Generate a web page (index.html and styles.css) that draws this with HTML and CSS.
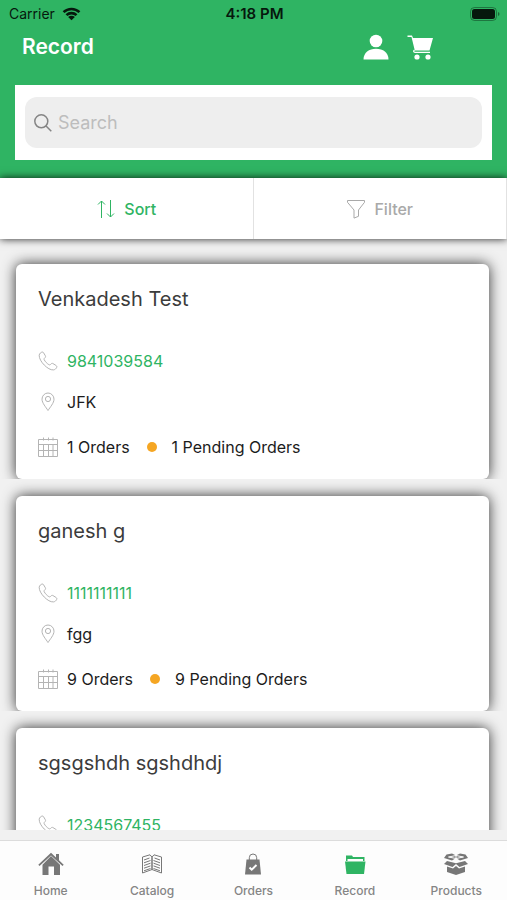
FILE: index.html
```html
<!DOCTYPE html>
<html lang="en">
<head>
<meta charset="utf-8">
<meta name="viewport" content="width=device-width, initial-scale=1">
<title>Record</title>
<link rel="stylesheet" href="styles.css">
</head>
<body>
<svg class="sprite" aria-hidden="true">
  <symbol id="phone" viewBox="0 0 20 20"><path d="M1.200 4.200C1.400 2.600 3 1.200 4.300 1c.7 0 1 .4 1.400 1l1.600 2.700c.5.9.2 1.500-.3 2-.9.8-1.200 1.300-.7 2.200.9 1.700 2.700 3.600 4.500 4.700.9.500 1.400.3 2.200-.6.600-.7 1.200-.9 2-.4l2.900 1.800c.9.600 1.100 1.200.8 2-.6 1.300-1.800 2.300-3.200 2.500-2.900.3-6.300-1.900-9.200-4.800C3.400 11.200 1 7.300 1.200 4.200z"/></symbol>
  <symbol id="pin" viewBox="0 0 20 20"><path d="M10 18.500C8 15.300 4 11 4 7.200a6 6.200 0 0 1 12 0c0 3.800-4 8.100-6 11.300z"/><circle cx="10" cy="7" r="2.600"/></symbol>
  <symbol id="calendar" viewBox="0 0 20 20"><path d="M.5 2.500h19v17H.5zM.5 7.500h19M.5 13.500h19M5.500 7.500v12M10.500 7.500v12M15 7.500v12M5.500.5v3M10.500.5v3M15 .5v3"/></symbol>
</svg>
<div class="app">
  <header class="header">
    <div class="status">
      <span class="carrier">Carrier
        <svg class="wifi" viewBox="0 0 20 15"><path d="M1.500 5.500a12.300 12.300 0 0 1 17 0M4.600 8.700a7.800 7.800 0 0 1 10.800 0" fill="none" stroke="currentColor" stroke-width="2.800"/><path d="M6.400 10.700a5.200 5.200 0 0 1 7.200 0L10 14.300z"/></svg>
      </span>
      <span class="time">4:18 PM</span>
      <span class="power"><svg class="battery" viewBox="0 0 30 14"><rect x=".5" y=".5" width="26" height="13" rx="4" fill="none" stroke="currentColor" opacity=".4"/><rect x="2" y="2" width="23" height="10" rx="2.500"/><path d="M28 5v4q1.500-.6 1.500-2T28 5z" opacity=".5"/></svg></span>
    </div>
    <div class="titlebar">
      <h1>Record</h1>
      <button class="action" type="button" aria-label="Profile"><svg viewBox="0 0 26 26"><circle cx="13" cy="7" r="6.300"/><path d="M.5 25.500C.5 18.500 6 14.700 13 14.700s12.500 3.800 12.500 10.800z"/></svg></button>
      <button class="action" type="button" aria-label="Cart"><svg viewBox="0 0 26 26"><path d="M.5 1.500H5l1 2.500h20l-3.500 12.500H7.800L4.500 3H.5z"/><path d="M7.500 16c-1.200.8-1 2.400.5 2.400h15" fill="none" stroke="currentColor" stroke-width="1.400"/><circle cx="10" cy="23" r="2.600"/><circle cx="21" cy="23" r="2.600"/></svg></button>
    </div>
    <form class="search" role="search">
      <label class="field">
        <svg viewBox="0 0 18 18"><circle cx="7.300" cy="7.300" r="6.500"/><path d="M12 12l5.300 5.300"/></svg>
        <input type="search" placeholder="Search" aria-label="Search">
      </label>
    </form>
  </header>

  <div class="tools">
    <button class="tool active" type="button"><svg viewBox="0 0 20 20"><path d="M5.500 19V2M2 5.500L5.500 2 9 5.500M14.500 1v17M11 14.500l3.500 3.500 3.500-3.500"/></svg>Sort</button>
    <button class="tool" type="button"><svg viewBox="0 0 20 20"><path d="M1.500 1.500h17v1.800L12.500 11v6.300l-4.500 1.800V11L1.500 3.300z"/></svg>Filter</button>
  </div>

  <main class="list">
    <section class="item"><article class="card">
      <h2>Venkadesh Test</h2>
      <div class="row"><svg><use href="#phone"/></svg><a href="tel:9841039584">9841039584</a></div>
      <div class="row"><svg><use href="#pin"/></svg><span>JFK</span></div>
      <div class="row totals"><svg><use href="#calendar"/></svg><span>1 Orders</span><i class="dot"></i><span>1 Pending Orders</span></div>
    </article></section>
    <section class="item"><article class="card">
      <h2>ganesh g</h2>
      <div class="row"><svg><use href="#phone"/></svg><a href="tel:1111111111">1111111111</a></div>
      <div class="row"><svg><use href="#pin"/></svg><span>fgg</span></div>
      <div class="row totals"><svg><use href="#calendar"/></svg><span>9 Orders</span><i class="dot"></i><span>9 Pending Orders</span></div>
    </article></section>
    <section class="item"><article class="card">
      <h2>sgsgshdh sgshdhdj</h2>
      <div class="row"><svg><use href="#phone"/></svg><a href="tel:1234567455">1234567455</a></div>
    </article></section>
  </main>

  <nav class="tabs">
    <a href="#home"><svg viewBox="0 0 26 24"><path d="M13 .8L18 5.500V2h3v6.300l4.700 4.400-1.200 1.300L13 3.600 1.500 14 .3 12.700z"/><path d="M13 4l9 8.700V23h-6v-8.500h-5.500V23H4.500V12.700z"/></svg>Home</a>
    <a href="#catalog"><svg viewBox="0 0 26 24"><path class="page" d="M3.500 5L11 2.800l2 2.400v12.300L3.500 21zM22.500 5L15 2.800l-2 2.400v12.300l9.500 3.500z"/><path class="page" d="M5 8l5.500-2M5 10.800l6.500-2.300M5 13.500l6.500-2.300M5 16.200l6.500-2.300M5 18.800l6.500-2.300M21 8l-5.500-2M21 10.800l-6.500-2.300M21 13.500l-6.500-2.300M21 16.200l-6.500-2.300M21 18.800l-6.500-2.300"/></svg>Catalog</a>
    <a href="#orders"><svg viewBox="0 0 26 24"><path d="M6.500 7.500h13L21 22.500H5z"/><path class="outline" d="M9.300 10V5.700a3.700 3.700 0 0 1 7.400 0V10"/><path class="check" d="M9.500 15.500l2.200 2.200 4.800-4.700"/></svg>Orders</a>
    <a class="current" href="#record" aria-current="page"><svg viewBox="0 0 26 24"><path d="M4 9V3.500h6L11 5h11.500v4H21V7H5.500v2z"/><path d="M3 9.500h20.500L22 22H4.500z"/></svg>Record</a>
    <a href="#products"><svg viewBox="0 0 26 24"><path d="M3.500 2.500L9 1.500l4 2 4-2 5.500 1 2.500 3.500-8 2.500-4-2.500-4 2.500L1 6z"/><path class="cut" d="M5.500 5l7.500-1.500L20.500 5 13 6.500zM13 3v4"/><path d="M1 12l3-3 9 2.300L22 9l3 3-8.500 3L13 12l-3.500 3z"/><path d="M4 14.500l6 2 3-2.500 3 2.500 6-2v5.500l-9 3-9-3z"/></svg>Products</a>
  </nav>
</div>
</body>
</html>
```
FILE: styles.css
```css
* { box-sizing: border-box; }

:root {
  --green: #2fb463;
  --page: #f1f1f1;
}

body {
  margin: 0;
  font-family: Inter, "Liberation Sans", sans-serif;
  font-size: 16px;
  line-height: 20px;
  color: #1c1c1c;
  background: var(--page);
}

button {
  border: 0;
  padding: 0;
  background: none;
  font: inherit;
}

a { text-decoration: none; }

.sprite {
  position: absolute;
  width: 0;
  height: 0;
}

.app {
  display: flex;
  flex-direction: column;
  height: 100vh;
}

.header {
  padding-bottom: 18px;
  background: var(--green);
}

.status {
  display: grid;
  grid-template-columns: 1fr auto 1fr;
  align-items: center;
  height: 28px;
  padding: 0 7px 0 9px;
  font-size: 14px;
  color: #06180d;
}

.carrier {
  display: flex;
  align-items: center;
  gap: 7px;
}

.wifi {
  width: 19px;
  height: 14px;
}

.time {
  font-size: 15px;
  font-weight: 600;
}

.power {
  display: flex;
  justify-content: flex-end;
}

.battery {
  width: 30px;
  height: 14px;
}

.titlebar {
  display: flex;
  align-items: center;
  gap: 18px;
  height: 37px;
  margin-bottom: 20px;
  padding: 0 74px 0 22px;
  color: #fff;
}

h1 {
  margin: 0 auto 0 0;
  font-size: 21px;
  line-height: 24px;
  font-weight: 600;
}

.action {
  display: flex;
  color: #fff;
}

.action svg {
  width: 26px;
  height: 26px;
}

.status svg,
.action svg { fill: currentColor; }

.search {
  margin: 0 15px;
  padding: 12px 10px;
  background: #fff;
}

.field {
  display: flex;
  align-items: center;
  gap: 6px;
  height: 51px;
  padding: 0 9px;
  border-radius: 12px;
  background: #eee;
}

.field svg {
  flex: none;
  width: 18px;
  height: 18px;
  fill: none;
  stroke: #858585;
  stroke-width: 1.5;
}

.field input {
  flex: 1;
  min-width: 0;
  padding: 0;
  border: 0;
  outline: 0;
  background: none;
  font: inherit;
  font-size: 18px;
}

.field input::placeholder { color: #bdbdbd; }

.tools {
  position: relative;
  display: grid;
  grid-template-columns: 1fr 1fr;
  height: 61px;
  background: #fff;
  box-shadow: 0 0 8px rgba(0, 0, 0, 0.85);
}

.tool {
  display: flex;
  align-items: center;
  justify-content: center;
  gap: 8px;
  border-right: 1px solid #e2e2e2;
  font-weight: 500;
  color: #a9a9a9;
}

.tool.active { color: var(--green); }

.tool svg {
  width: 20px;
  height: 20px;
  fill: none;
  stroke: currentColor;
}

.list {
  flex: 1;
  min-height: 0;
  margin: 8px 0 10px;
  overflow: hidden;
}

.item {
  padding: 17px 18px 0 16px;
  overflow: hidden;
}

.card {
  height: 215px;
  padding: 23px 22px 0;
  border-radius: 6px;
  background: #fff;
  box-shadow: 0 0 14px rgba(0, 0, 0, 0.8);
}

h2 {
  margin: 0 0 40px;
  font-size: 20px;
  line-height: 24px;
  font-weight: 400;
  color: #3c3c3c;
}

.row {
  display: flex;
  align-items: center;
  height: 20px;
  margin-bottom: 21px;
}

.row svg {
  width: 20px;
  height: 20px;
  margin-right: 9px;
  fill: none;
  stroke: #b4b4b4;
}

.row a { color: var(--green); }

.totals { margin-top: 25px; }

.dot {
  width: 10px;
  height: 10px;
  margin: 0 15px 0 17px;
  border-radius: 50%;
  background: #f5a623;
}

.tabs {
  display: grid;
  grid-template-columns: repeat(5, 1fr);
  border-top: 1px solid #dcdcdc;
  background: #fdfdfd;
}

.tabs a {
  display: flex;
  flex-direction: column;
  align-items: center;
  gap: 7px;
  height: 59px;
  padding-top: 11px;
  font-size: 12px;
  line-height: 16px;
  font-weight: 500;
  color: #858585;
}

.tabs svg {
  width: 26px;
  height: 24px;
  fill: #777;
}

.tabs .current svg { fill: var(--green); }

.tabs .cut,
.tabs .check {
  fill: none;
  stroke: #fdfdfd;
}

.tabs .check { stroke-width: 2; }

.tabs .outline,
.tabs .page {
  fill: none;
  stroke: #777;
}
```
